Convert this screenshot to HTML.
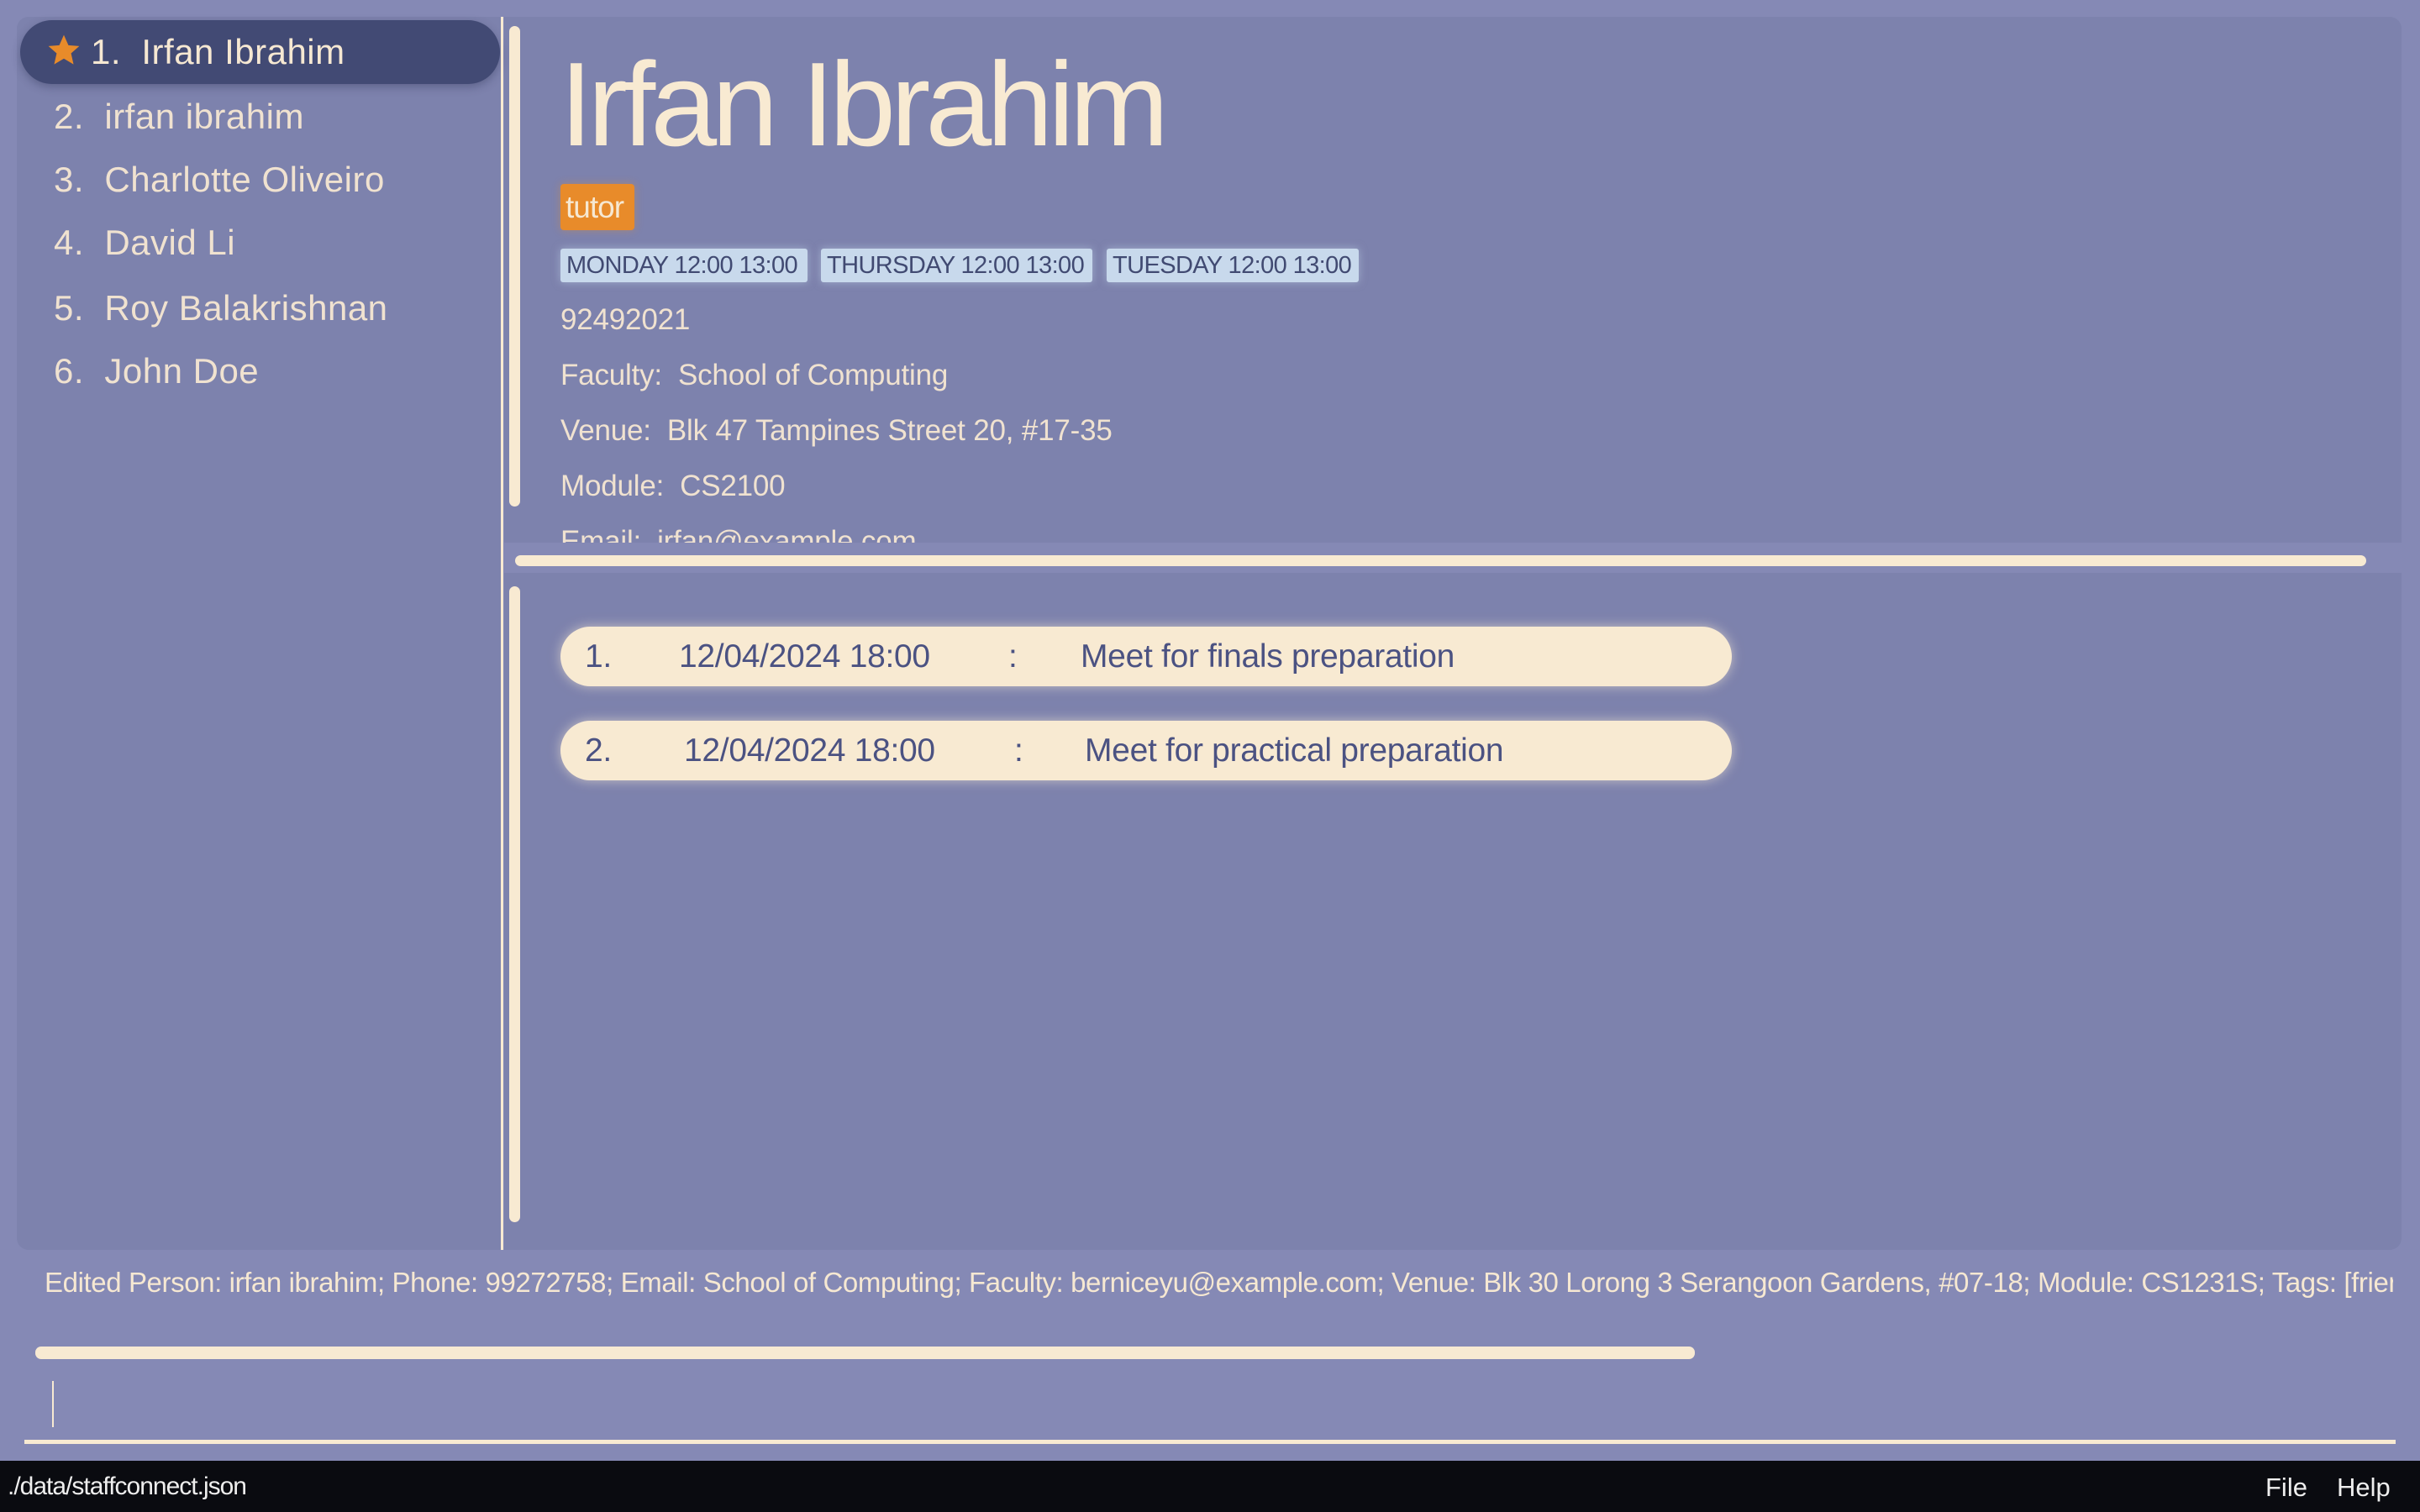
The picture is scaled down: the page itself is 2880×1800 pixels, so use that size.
<!DOCTYPE html>
<html><head><meta charset="utf-8"><style>
*{margin:0;padding:0;box-sizing:border-box}
html,body{width:2880px;height:1800px;overflow:hidden;background:#8589B5;font-family:"Liberation Sans",sans-serif;color:#F6E8D2}
.a{position:absolute;white-space:nowrap;line-height:1}
.panel{position:absolute;background:#7D82AD}
.cream{background:#F8EAD2;position:absolute}
.li{font-size:42px;letter-spacing:0.5px;color:#F0E2D0}
.day{position:absolute;top:296px;height:40px;background:#C8D9EC;color:#414A72;font-size:29px;letter-spacing:-0.6px;line-height:40px;padding-left:7px;border-radius:3px;box-shadow:0 0 10px rgba(200,217,236,.5)}
.info{font-size:35px;letter-spacing:-0.2px;color:#F0E2D0}
.pill{position:absolute;left:667px;width:1394px;height:71px;background:#F8EAD2;border-radius:36px;box-shadow:0 0 14px rgba(248,234,210,.6);color:#4B5282;font-size:39px;letter-spacing:-0.3px}
.pill span{position:absolute;top:16px;line-height:1}
</style></head><body>
<div class="panel" style="left:20px;top:20px;width:576px;height:1468px;border-radius:14px 0 0 14px"></div>
<div class="panel" style="left:600px;top:20px;width:2258px;height:626px;border-radius:0 14px 0 0"></div>
<div class="panel" style="left:600px;top:682px;width:2258px;height:806px;border-radius:0 0 14px 0"></div>
<div style="position:absolute;left:24px;top:24px;width:571px;height:76px;background:#424A74;border-radius:38px;box-shadow:0 4px 10px rgba(40,45,80,.35)"></div>
<svg class="a" style="left:55px;top:39px" width="42" height="42" viewBox="0 0 24 24"><path d="M12 1.5l3.1 7 7.4.6-5.6 4.9 1.7 7.5L12 17.6l-6.6 3.9 1.7-7.5L1.5 9.1l7.4-.6z" fill="#E88B2A"/></svg>
<div class="a li" style="left:108px;top:41px;color:#F6E8D2">1.&nbsp; Irfan Ibrahim</div>
<div class="a li" style="left:64px;top:118px">2.&nbsp; irfan ibrahim</div>
<div class="a li" style="left:64px;top:193px">3.&nbsp; Charlotte Oliveiro</div>
<div class="a li" style="left:64px;top:268px">4.&nbsp; David Li</div>
<div class="a li" style="left:64px;top:346px">5.&nbsp; Roy Balakrishnan</div>
<div class="a li" style="left:64px;top:421px">6.&nbsp; John Doe</div>
<div class="cream" style="left:596px;top:20px;width:3px;height:1468px"></div>
<div class="cream" style="left:606px;top:31px;width:13px;height:572px;border-radius:7px"></div>
<div class="cream" style="left:606px;top:698px;width:13px;height:757px;border-radius:7px"></div>
<div class="cream" style="left:613px;top:661px;width:2203px;height:13px;border-radius:7px"></div>
<div style="position:absolute;left:600px;top:20px;width:2258px;height:626px;overflow:hidden">
<div class="a" style="left:66px;top:34px;font-size:142px;letter-spacing:-6px;color:#F8EAD2">Irfan Ibrahim</div>
<div class="a" style="left:67px;top:199px;width:88px;height:55px;background:#E88B2A;border-radius:4px;font-size:37px;letter-spacing:-1px;line-height:55px;padding-left:6px;box-shadow:0 0 10px rgba(232,139,42,.4)">tutor</div>
<div class="day" style="left:67px;top:276px;width:294px">MONDAY 12:00 13:00</div>
<div class="day" style="left:377px;top:276px;width:323px">THURSDAY 12:00 13:00</div>
<div class="day" style="left:717px;top:276px;width:300px">TUESDAY 12:00 13:00</div>
<div class="a info" style="left:67px;top:343px">92492021</div>
<div class="a info" style="left:67px;top:409px">Faculty:&nbsp; School of Computing</div>
<div class="a info" style="left:67px;top:475px">Venue:&nbsp; Blk 47 Tampines Street 20, #17-35</div>
<div class="a info" style="left:67px;top:541px">Module:&nbsp; CS2100</div>
<div class="a info" style="left:67px;top:607px">Email:&nbsp; irfan@example.com</div>
</div>
<div class="pill" style="top:746px"><span style="left:29px">1.</span><span style="left:141px">12/04/2024 18:00</span><span style="left:533px">:</span><span style="left:619px">Meet for finals preparation</span></div>
<div class="pill" style="top:858px"><span style="left:29px">2.</span><span style="left:147px">12/04/2024 18:00</span><span style="left:540px">:</span><span style="left:624px">Meet for practical preparation</span></div>
<div style="position:absolute;left:53px;top:1508px;width:2795px;height:40px;overflow:hidden"><div class="a" style="left:0;top:2px;font-size:33px;letter-spacing:-0.4px">Edited Person: irfan ibrahim; Phone: 99272758; Email: School of Computing; Faculty: berniceyu@example.com; Venue: Blk 30 Lorong 3 Serangoon Gardens, #07-18; Module: CS1231S; Tags: [friends]</div></div>
<div class="cream" style="left:42px;top:1603px;width:1975px;height:15px;border-radius:7px"></div>
<div style="position:absolute;left:62px;top:1644px;width:2px;height:55px;background:#F8EAD2"></div>
<div class="cream" style="left:29px;top:1714px;width:2822px;height:5px"></div>
<div style="position:absolute;left:0;top:1739px;width:2880px;height:61px;background:#0A0B10"></div>
<div class="a" style="left:9px;top:1755px;font-size:30px;letter-spacing:-1px;color:#EEE">./data/staffconnect.json</div>
<div class="a" style="left:2696px;top:1755px;font-size:31px;color:#EEE">File</div>
<div class="a" style="left:2781px;top:1755px;font-size:31px;color:#EEE">Help</div>
</body></html>
